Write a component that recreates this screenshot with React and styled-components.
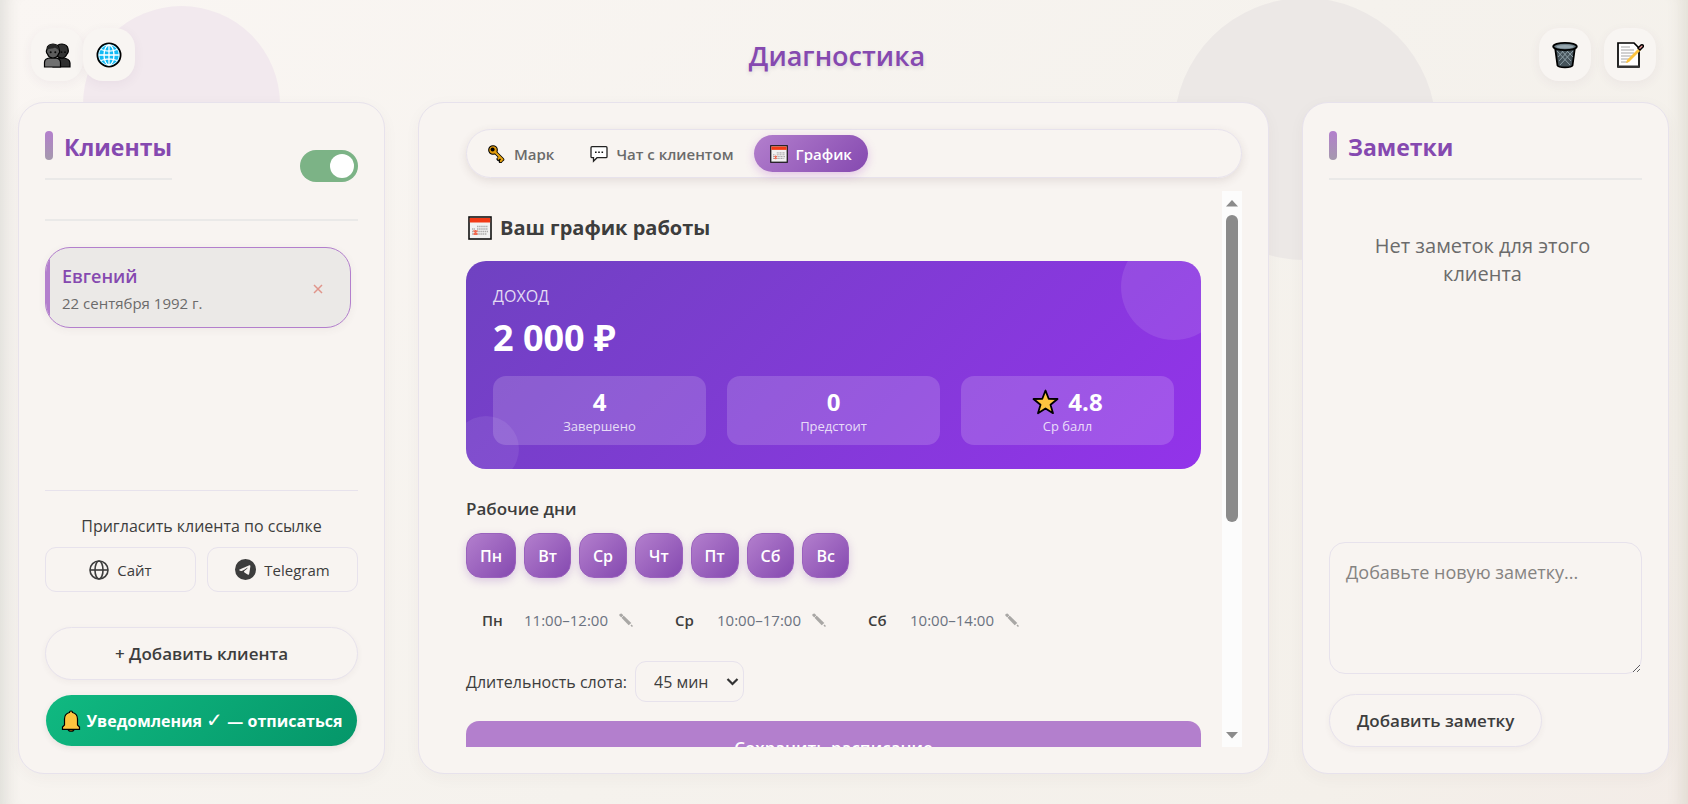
import React, { useState } from "react";
import styled, { createGlobalStyle, css } from "styled-components";

const GlobalStyle = createGlobalStyle`
  *, *::before, *::after { box-sizing: border-box; }
  html, body { margin: 0; padding: 0; }
  body {
    font-family: "Open Sans", "Noto Sans", sans-serif;
    color: #3d3d3d;
    background: #f8f5f1;
  }
  button, input, select, textarea { font-family: inherit; color: inherit; }
  button { cursor: pointer; }
  h1, h2, h3, p, ul { margin: 0; padding: 0; }
`;

const Page = styled.div`
  position: relative;
  display: flex;
  flex-direction: column;
  height: 100vh;
  min-height: 640px;
  padding-bottom: 30px;
  overflow: hidden;
  background: linear-gradient(135deg, #faf6f3 0%, #f5f2ed 55%, #f4f0ea 85%, #f3ece7 100%);
  box-shadow: inset 20px 0 16px -14px rgba(80, 90, 80, 0.14), inset -20px 0 16px -14px rgba(80, 80, 50, 0.11);
`;

const Orb = styled.div`
  position: absolute;
  width: ${(p) => p.$size}px;
  height: ${(p) => p.$size}px;
  left: ${(p) => p.$left};
  top: ${(p) => p.$top}px;
  border-radius: 50%;
  background: ${(p) => p.$color};
`;

const TopBar = styled.header`
  position: relative;
  display: flex;
  justify-content: space-between;
  align-items: center;
  padding: 28px 32px 21px 31px;
`;

const Group = styled.div`
  display: flex;
  gap: ${(p) => p.$gap}px;
`;

const IconButton = styled.button`
  display: grid;
  place-items: center;
  width: 52px;
  height: 53px;
  padding: 0;
  border: 0;
  border-radius: 20px;
  background: #f8f5f2;
  box-shadow: 0 3px 12px rgba(80, 50, 100, 0.06);
`;

const PageTitle = styled.h1`
  padding-top: 2px;
  font-size: 27px;
  line-height: 40px;
  font-weight: 600;
  color: #8549b0;
  text-shadow: 0 2px 4px rgba(60, 40, 80, 0.14);
`;

const Columns = styled.main`
  position: relative;
  flex: 1;
  min-height: 0;
  display: grid;
  grid-template-columns: 367px minmax(0, 1fr) 367px;
  gap: 33px;
  padding: 0 19px 0 18px;
`;

const Panel = styled.section`
  display: flex;
  flex-direction: column;
  min-height: 0;
  padding: ${(p) => (p.$wide ? "26px 26px 26px 47px" : "27px 26px 26px")};
  border: 1px solid #e7e2ec;
  border-radius: 26px;
  background: #f8f4f1;
  box-shadow: 0 4px 16px rgba(80, 60, 60, 0.04);
`;

const SectionTitle = styled.h2`
  display: flex;
  gap: 11px;
  padding-bottom: 14px;
  border-bottom: 2px solid #eae9e8;
  font-size: 23px;
  line-height: 34px;
  font-weight: 700;
  color: #8549b0;

  &::before {
    content: "";
    width: 8px;
    height: 29px;
    margin-top: 1px;
    border-radius: 4px;
    background: linear-gradient(#b37fcd, #a599ad);
  }
`;

const ClientsHead = styled.div`
  display: flex;
  align-items: center;
  justify-content: space-between;
  height: 91px;
  padding-bottom: 17px;
  border-bottom: 2px solid #eae9e8;

  ${SectionTitle} { margin-bottom: 22px; }
`;

const Toggle = styled.input`
  appearance: none;
  width: 58px;
  height: 32px;
  margin: 0;
  padding: 4px;
  border-radius: 16px;
  background: ${(p) => (p.checked ? "#7cb386" : "#c9c5c2")};
  display: flex;
  justify-content: ${(p) => (p.checked ? "flex-end" : "flex-start")};
  cursor: pointer;

  &::before {
    content: "";
    width: 24px;
    height: 24px;
    border-radius: 50%;
    background: #fff;
  }
`;

const ClientList = styled.ul`
  flex: 1;
  min-height: 0;
  list-style: none;
  padding: 26px 7px 0 0;
`;

const ClientCard = styled.li`
  position: relative;
  overflow: hidden;
  display: flex;
  align-items: center;
  justify-content: space-between;
  height: 81px;
  padding: 2px 17px 0 16px;
  border: 1px solid #b37fcd;
  border-radius: 25px;
  background: #ebe9e7;
  box-shadow: 0 2px 8px rgba(80, 60, 60, 0.06);

  &::before {
    content: "";
    position: absolute;
    inset: 0 auto 0 0;
    width: 4px;
    background: #b37fcd;
  }
`;

const ClientName = styled.div`
  font-size: 18px;
  line-height: 28px;
  font-weight: 600;
  color: #8549b0;
`;

const ClientDate = styled.div`
  font-size: 15px;
  line-height: 26px;
  color: #6b6b6b;
`;

const RemoveButton = styled.button`
  display: grid;
  place-items: center;
  width: 30px;
  height: 30px;
  padding: 0;
  border: 0;
  background: none;
`;

const Invite = styled.div`
  display: grid;
  grid-template-columns: 1fr 1fr;
  gap: 9px 11px;
  padding-top: 23px;
  margin-bottom: 35px;
  border-top: 1px solid #e7e2ec;
`;

const InviteText = styled.p`
  grid-column: 1 / -1;
  font-size: 16px;
  line-height: 24px;
  text-align: center;
`;

const InviteButton = styled.button`
  display: flex;
  align-items: center;
  justify-content: center;
  gap: 8px;
  height: 45px;
  padding: 0;
  border: 1px solid #e7e2ec;
  border-radius: 11px;
  background: transparent;
  font-size: 15px;
`;

const PillButton = styled.button`
  height: 53px;
  padding: 0 27px;
  align-self: ${(p) => (p.$fit ? "flex-start" : "stretch")};
  border: 1px solid #e7e2ec;
  border-radius: 27px;
  background: #f8f4f1;
  font-size: 17px;
  font-weight: 600;
  box-shadow: 0 2px 6px rgba(80, 60, 60, 0.05);
`;

const NotifyButton = styled.button`
  display: flex;
  align-items: center;
  justify-content: center;
  gap: 6px;
  height: 51px;
  margin: 15px 1px 1px;
  padding: 0;
  border: 0;
  border-radius: 26px;
  background: linear-gradient(135deg, #10b981, #059669);
  color: #fff;
  font-size: 16px;
  font-weight: 700;
  white-space: nowrap;
  box-shadow: 0 2px 6px rgba(80, 60, 60, 0.1);
`;

const Check = styled.span`
  font-size: 20px;
  line-height: 20px;
  font-weight: 400;
`;

const Tabs = styled.nav`
  display: flex;
  align-items: center;
  gap: 4px;
  flex: none;
  height: 49px;
  padding: 0 5px;
  border: 1px solid #e7e2ec;
  border-radius: 25px;
  box-shadow: 0 3px 10px rgba(80, 60, 60, 0.12);
`;

const Tab = styled.button`
  display: flex;
  align-items: center;
  gap: 8px;
  height: 37px;
  padding: 0 16px;
  border: 0;
  border-radius: 19px;
  background: none;
  color: #6b6b6b;
  font-size: 15px;
  font-weight: 600;
  ${(p) =>
    p.$active &&
    css`
      color: #fff;
      background: linear-gradient(135deg, #b37fcd, #8549b0);
      box-shadow: 0 3px 10px rgba(179, 90, 205, 0.3);
    `}
`;

const ScrollFrame = styled.div`
  flex: 1;
  min-height: 0;
  display: flex;
  gap: 21px;
  margin-top: 13px;
`;

const ScrollBody = styled.div`
  flex: 1;
  min-width: 0;
  overflow-y: auto;
  scrollbar-width: none;
  margin-left: -10px;
  padding-left: 10px;
`;

const ScrollTrack = styled.div`
  display: flex;
  flex-direction: column;
  align-items: center;
  justify-content: space-between;
  width: 20px;
  padding: 9px 0 8px;
  background: #fcfcfc;
`;

const ScrollThumb = styled.div`
  width: 12px;
  height: 57%;
  margin-bottom: auto;
  margin-top: 8px;
  border-radius: 6px;
  background: #8b8b8b;
`;

const ScheduleTitle = styled.h3`
  display: flex;
  align-items: center;
  gap: 8px;
  padding: 21px 0 17px 2px;
  font-size: 20px;
  line-height: 32px;
  font-weight: 700;
`;

const IncomeCard = styled.div`
  position: relative;
  overflow: hidden;
  padding: 22px 27px 24px;
  border-radius: 20px;
  background: linear-gradient(135deg, #6f42c1 0%, #9333ea 100%);
  color: #fff;
`;

const Bubble = styled.div`
  position: absolute;
  width: ${(p) => p.$size}px;
  height: ${(p) => p.$size}px;
  border-radius: 50%;
  background: rgba(255, 255, 255, ${(p) => p.$alpha});
  ${(p) => (p.$corner === "top" ? "top: -27px; right: -26px;" : "bottom: -13px; left: -13px;")}
`;

const IncomeLabel = styled.div`
  font-size: 16px;
  line-height: 26px;
  color: rgba(255, 255, 255, 0.82);
`;

const IncomeValue = styled.div`
  margin: 4px 0 13px;
  font-size: 36px;
  line-height: 50px;
  font-weight: 700;
`;

const Stats = styled.div`
  position: relative;
  display: grid;
  grid-template-columns: repeat(3, 1fr);
  gap: 21px;
`;

const Stat = styled.div`
  height: 69px;
  padding-top: 11px;
  border-radius: 13px;
  background: rgba(255, 255, 255, 0.16);
  text-align: center;
`;

const StatValue = styled.div`
  display: flex;
  align-items: center;
  justify-content: center;
  gap: 9px;
  font-size: 24px;
  line-height: 30px;
  font-weight: 700;
`;

const StatLabel = styled.div`
  font-size: 13px;
  line-height: 18px;
  color: rgba(255, 255, 255, 0.8);
`;

const Subheading = styled.h3`
  margin-top: 27px;
  font-size: 17px;
  line-height: 26px;
  font-weight: 600;
`;

const Days = styled.div`
  display: flex;
  gap: 8px;
  margin-top: 11px;
`;

const DayButton = styled.button`
  height: 45px;
  padding: 0 13px;
  border: 1px solid #9a62bd;
  border-radius: 15px;
  background: linear-gradient(135deg, #b37fcd, #8549b0);
  color: #fff;
  font-size: 16px;
  font-weight: 600;
  box-shadow: 0 3px 9px rgba(133, 73, 176, 0.25);
`;

const Hours = styled.ul`
  display: flex;
  list-style: none;
  margin-top: 27px;
  padding-left: 16px;
`;

const HoursItem = styled.li`
  display: grid;
  grid-template-columns: 42px 87px auto;
  align-items: center;
  width: 193px;
  height: 30px;
  font-size: 15px;
  color: #6b7280;

  b { font-weight: 600; color: #3d3d3d; }
`;

const EditButton = styled.button`
  display: grid;
  place-items: center;
  width: 30px;
  height: 24px;
  padding: 0;
  border: 0;
  background: none;
`;

const SlotRow = styled.div`
  display: flex;
  align-items: center;
  gap: 8px;
  margin: 26px 0 19px;
  font-size: 16px;
`;

const SelectWrap = styled.span`
  display: grid;
  align-items: center;

  > * { grid-area: 1 / 1; }
  svg { justify-self: end; margin-right: 5px; pointer-events: none; }
`;

const SlotSelect = styled.select`
  appearance: none;
  width: 109px;
  height: 41px;
  padding: 0 18px;
  border: 1px solid #e7e2ec;
  border-radius: 11px;
  background: transparent;
  font-size: 16px;
`;

const SaveButton = styled.button`
  width: 100%;
  height: 53px;
  border: 0;
  border-radius: 13px;
  background: #b37fcd;
  color: #fff;
  font-size: 17px;
  font-weight: 600;
`;

const EmptyNotes = styled.p`
  flex: 1;
  padding: 52px 32px 0 26px;
  text-align: center;
  font-size: 20px;
  line-height: 28px;
  color: #6b6b6b;
`;

const NoteInput = styled.textarea`
  display: block;
  height: 132px;
  margin-bottom: 20px;
  padding: 17px 16px;
  border: 1px solid #e7e2ec;
  border-radius: 16px;
  background: transparent;
  font-size: 18px;
  line-height: 25px;
  resize: vertical;

  &::placeholder { color: #858381; }
`;

const PeopleIcon = () => (
  <svg width="28" height="28" viewBox="0 0 28 28" aria-hidden="true">
    <path d="M10 26v-5c1-3 4-4 8-4 5 0 9 1 9 5v4z" fill="#2f2f2f" stroke="#000" strokeWidth="1.200" />
    <path d="M13 7c1-3 4-4 6-4 3 0 6 2 6 5 1 3 0 4-1 5-1 2-3 4-5 4s-5-1-6-4z" fill="#333" stroke="#000" strokeWidth="1.200" />
    <path d="M1.500 26v-4.500c0-3 2.500-4.500 6.500-4.500h3c4 0 6.500 1.500 6.500 4.500V26z" fill="#707070" stroke="#000" strokeWidth="1.200" />
    <path d="M4 8c0-3 2.500-5 6-5s6 2 6 5c1 2 .5 4-.5 5-1 3-3.500 4-5.500 4s-4.500-1-5.500-4c-1-1-1.500-3-.5-5z" fill="#5c5c5c" stroke="#000" strokeWidth="1.200" />
    <path d="M4 9c0-4 2.500-5.500 6-5.500s6 1.500 6 5.500c-3-1-3-3-5-2S6 7 4 9z" fill="#262626" />
    <g fill="#0a0a0a">
      <circle cx="7.700" cy="11.200" r="1" />
      <circle cx="12.300" cy="11.200" r="1" />
      <circle cx="18.500" cy="11.200" r=".9" />
      <circle cx="22" cy="11.200" r=".9" />
    </g>
  </svg>
);

const GlobeIcon = () => (
  <svg width="28" height="28" viewBox="0 0 28 28" aria-hidden="true">
    <circle cx="14" cy="14" r="11.600" fill="#12baf5" stroke="#000" strokeWidth="1.800" />
    <g fill="none" stroke="#fff" strokeWidth="1.300">
      <circle cx="14" cy="14" r="10.200" strokeWidth=".8" />
      <path d="M14 4v20M4 14h20M6 8.500c5 2 11 2 16 0M6 19.500c5-2 11-2 16 0" />
      <ellipse cx="14" cy="14" rx="5" ry="10" />
    </g>
  </svg>
);

const TrashIcon = () => (
  <svg width="28" height="28" viewBox="0 0 28 28" aria-hidden="true">
    <path d="M4 6l2.500 18.500c1 2.500 14 2.500 15 0L24 6z" fill="#46535a" stroke="#000" strokeWidth="1.800" />
    <path d="M6 10l13 14M10 9l10 11M15 9l7 7M22 10L9 24M18 9L8 20M13 9l-6 7" stroke="#8fa0a8" strokeWidth="1" />
    <ellipse cx="14" cy="5.500" rx="11.800" ry="3.700" fill="#6f8089" stroke="#000" strokeWidth="1.800" />
    <ellipse cx="14" cy="5.800" rx="8.500" ry="1.700" fill="#98a8b0" />
  </svg>
);

const MemoIcon = () => (
  <svg width="28" height="28" viewBox="0 0 28 28" aria-hidden="true">
    <path d="M2 2h16l5 5v19H2z" fill="#fff" stroke="#000" strokeWidth="1.700" />
    <path d="M2 25.500h21" stroke="#333" strokeWidth="2" />
    <path d="M5 6h9M5 9h13M5 12h13M5 15h11M5 18h9M5 21h7" stroke="#a6a6a6" strokeWidth="1.100" />
    <path d="M10 22l1-3L23 7l2 2-12 12z" fill="#fdc43f" />
    <path d="M22 7l3-3c2-1 3 1 2 2l-3 3z" fill="#f19b9b" stroke="#000" strokeWidth="1.500" />
  </svg>
);

const CalendarIcon = ({ size }) => (
  <svg width={size} height={size} viewBox="0 0 24 24" aria-hidden="true">
    <rect x="1" y="1" width="22" height="22" fill="#f2f2f2" stroke="#111" strokeWidth="1.600" />
    <path d="M1.800 2h20.400v4.500H1.800z" fill="#f23a16" />
    <path d="M9 10.500h11M9 13h11M4 13h3M4 15.500h16M4 18h15" stroke="#adadad" strokeWidth="1.500" strokeDasharray="1.500 .6" />
    <path d="M5.500 14.500l4 4M9.500 14.500l-4 4M7.500 14v5" stroke="#f2694f" strokeWidth="1.300" />
  </svg>
);

const KeyIcon = () => (
  <svg width="18" height="18" viewBox="0 0 18 18" aria-hidden="true">
    <path d="M7 7l7.500 7.500M11.500 12.500l-1.200 1.500M14 14.500l-1.500 2" stroke="#000" strokeWidth="3.600" strokeLinecap="round" />
    <circle cx="5" cy="5" r="4.300" fill="#e39b0b" stroke="#000" strokeWidth="1.100" />
    <path d="M7.500 7.500l7 7M11.500 12.500l-1 1.200M14 14.500l-1.200 1.700" stroke="#e8a30f" strokeWidth="2" strokeLinecap="round" />
    <circle cx="4.600" cy="4.600" r="2" fill="#000" />
  </svg>
);

const ChatIcon = () => (
  <svg width="18" height="18" viewBox="0 0 18 18" aria-hidden="true">
    <path d="M2 1.700h14q1 0 1 1v9q0 1-1 1H7l-3.500 3.500v-3.500H2q-1 0-1-1v-9q0-1 1-1z" fill="#fff" stroke="#222" strokeWidth="1.300" />
    <path d="M5 7.200h1.600M8.200 7.200h1.600M11.500 7.200h1.600" stroke="#111" strokeWidth="1.600" />
  </svg>
);

const BellIcon = () => (
  <svg width="20" height="22" viewBox="0 0 20 22" aria-hidden="true">
    <path d="M7 19h6c0 3-6 3-6 0z" fill="#c46f0b" stroke="#000" strokeWidth="1.200" />
    <path d="M8.500 2.500c0-2 3-2 3 0 3 .7 5 3 5 6.500v6l2 2v2.300h-17V17l2-2V9c0-3.500 2-5.800 5-6.500z" fill="#fdc43f" stroke="#000" strokeWidth="1.200" />
  </svg>
);

const StarIcon = () => (
  <svg width="27" height="26" viewBox="0 0 27 26" aria-hidden="true">
    <path d="M13.500 1.500l3.200 8.300 8.800.2-7 5.700 2.500 8.500-7.500-4.700L6 24.200l2.500-8.500-7-5.700 8.800-.2z" fill="#fdc43f" stroke="#000" strokeWidth="1.800" strokeLinejoin="round" />
  </svg>
);

const SiteIcon = () => (
  <svg width="20" height="20" viewBox="0 0 20 20" fill="none" stroke="#3d3d3d" strokeWidth="1.600" aria-hidden="true">
    <circle cx="10" cy="10" r="9" />
    <ellipse cx="10" cy="10" rx="4" ry="9" />
    <path d="M1 10h18" />
  </svg>
);

const TelegramIcon = () => (
  <svg width="21" height="21" viewBox="0 0 24 24" aria-hidden="true">
    <path fill="#3d3d3d" d="M11.944 0A12 12 0 0 0 0 12a12 12 0 0 0 12 12 12 12 0 0 0 12-12A12 12 0 0 0 12 0a12 12 0 0 0-.056 0zm4.962 7.224c.1-.002.321.023.465.14a.506.506 0 0 1 .171.325c.016.093.036.306.02.472-.18 1.898-.962 6.502-1.36 8.627-.168.9-.499 1.201-.82 1.230-.696.065-1.225-.46-1.900-.902-1.056-.693-1.653-1.124-2.678-1.800-1.185-.78-.417-1.210.258-1.910.177-.184 3.247-2.977 3.307-3.230.007-.032.014-.15-.056-.212s-.174-.041-.249-.024c-.106.024-1.793 1.140-5.061 3.345-.48.330-.913.490-1.302.480-.428-.008-1.252-.241-1.865-.440-.752-.245-1.349-.374-1.297-.789.027-.216.325-.437.893-.663 3.498-1.524 5.830-2.529 6.998-3.014 3.332-1.386 4.025-1.627 4.476-1.635z" />
  </svg>
);

const PencilIcon = () => (
  <svg width="14" height="14" viewBox="0 0 14 14" aria-hidden="true">
    <path d="M.3 2.500Q0 .5 2.500.5L12.300 10l-2.600 2.300z" fill="#a9a7a5" />
    <path d="M12 12l1.500 1.500" stroke="#a9a7a5" strokeWidth="1.500" />
    <path d="M2 5l3-3" stroke="#f8f4f1" strokeWidth=".7" />
  </svg>
);

const CrossIcon = () => (
  <svg width="10" height="10" viewBox="0 0 10 10" aria-hidden="true">
    <path d="M1 1l8 8M9 1L1 9" stroke="#e0958b" strokeWidth="1.500" />
  </svg>
);

const ChevronIcon = () => (
  <svg width="13" height="10" viewBox="0 0 13 10" aria-hidden="true">
    <path d="M1.500 2l5 5 5-5" fill="none" stroke="#333" strokeWidth="2.200" />
  </svg>
);

const ArrowIcon = ({ down }) => (
  <svg width="12" height="7" viewBox="0 0 12 7" aria-hidden="true">
    <path d={down ? "M0 0h12L6 6.500z" : "M0 6.500h12L6 0z"} fill="#8b8b8b" />
  </svg>
);

const tabs = [
  { label: "Марк", icon: <KeyIcon /> },
  { label: "Чат с клиентом", icon: <ChatIcon /> },
  { label: "График", icon: <CalendarIcon size={18} /> },
];

const stats = [
  { value: "4", label: "Завершено" },
  { value: "0", label: "Предстоит" },
  { value: "4.8", label: "Ср балл", star: true },
];

const days = ["Пн", "Вт", "Ср", "Чт", "Пт", "Сб", "Вс"];

const hours = [
  ["Пн", "11:00–12:00"],
  ["Ср", "10:00–17:00"],
  ["Сб", "10:00–14:00"],
];

export default function App() {
  const [online, setOnline] = useState(true);
  const [tab, setTab] = useState(2);

  return (
    <Page>
      <GlobalStyle />
      <Orb $size={197} $left="83px" $top={6} $color="#f2e9ee" />
      <Orb $size={262} $left="calc(70% - 8px)" $top={-2} $color="#ece8e6" />

      <TopBar>
        <Group $gap={0}>
          <IconButton aria-label="Клиенты"><PeopleIcon /></IconButton>
          <IconButton aria-label="Язык"><GlobeIcon /></IconButton>
        </Group>
        <PageTitle>Диагностика</PageTitle>
        <Group $gap={13}>
          <IconButton aria-label="Удалить"><TrashIcon /></IconButton>
          <IconButton aria-label="Заметки"><MemoIcon /></IconButton>
        </Group>
      </TopBar>

      <Columns>
        <Panel>
          <ClientsHead>
            <SectionTitle>Клиенты</SectionTitle>
            <Toggle
              type="checkbox"
              role="switch"
              aria-label="Онлайн"
              checked={online}
              onChange={(e) => setOnline(e.target.checked)}
            />
          </ClientsHead>
          <ClientList>
            <ClientCard>
              <div>
                <ClientName>Евгений</ClientName>
                <ClientDate>22 сентября 1992 г.</ClientDate>
              </div>
              <RemoveButton aria-label="Удалить клиента"><CrossIcon /></RemoveButton>
            </ClientCard>
          </ClientList>
          <Invite>
            <InviteText>Пригласить клиента по ссылке</InviteText>
            <InviteButton><SiteIcon />Сайт</InviteButton>
            <InviteButton><TelegramIcon />Telegram</InviteButton>
          </Invite>
          <PillButton>+ Добавить клиента</PillButton>
          <NotifyButton>
            <BellIcon />
            <span>Уведомления <Check>✓</Check> — отписаться</span>
          </NotifyButton>
        </Panel>

        <Panel $wide>
          <Tabs>
            {tabs.map((t, i) => (
              <Tab key={t.label} $active={i === tab} onClick={() => setTab(i)}>
                {t.icon}
                {t.label}
              </Tab>
            ))}
          </Tabs>
          <ScrollFrame>
            <ScrollBody>
              <ScheduleTitle><CalendarIcon size={24} />Ваш график работы</ScheduleTitle>
              <IncomeCard>
                <Bubble $size={106} $alpha={0.1} $corner="top" />
                <Bubble $size={66} $alpha={0.08} $corner="bottom" />
                <IncomeLabel>ДОХОД</IncomeLabel>
                <IncomeValue>2 000 ₽</IncomeValue>
                <Stats>
                  {stats.map((s) => (
                    <Stat key={s.label}>
                      <StatValue>{s.star && <StarIcon />}{s.value}</StatValue>
                      <StatLabel>{s.label}</StatLabel>
                    </Stat>
                  ))}
                </Stats>
              </IncomeCard>
              <Subheading>Рабочие дни</Subheading>
              <Days>
                {days.map((d) => <DayButton key={d}>{d}</DayButton>)}
              </Days>
              <Hours>
                {hours.map(([day, time]) => (
                  <HoursItem key={day}>
                    <b>{day}</b>
                    <span>{time}</span>
                    <EditButton aria-label={`Изменить ${day}`}><PencilIcon /></EditButton>
                  </HoursItem>
                ))}
              </Hours>
              <SlotRow>
                <label htmlFor="slot">Длительность слота:</label>
                <SelectWrap>
                  <SlotSelect id="slot" defaultValue="45">
                    <option value="45">45 мин</option>
                  </SlotSelect>
                  <ChevronIcon />
                </SelectWrap>
              </SlotRow>
              <SaveButton>Сохранить расписание</SaveButton>
            </ScrollBody>
            <ScrollTrack aria-hidden="true">
              <ArrowIcon />
              <ScrollThumb />
              <ArrowIcon down />
            </ScrollTrack>
          </ScrollFrame>
        </Panel>

        <Panel>
          <SectionTitle>Заметки</SectionTitle>
          <EmptyNotes>Нет заметок для этого клиента</EmptyNotes>
          <NoteInput aria-label="Новая заметка" placeholder="Добавьте новую заметку..." />
          <PillButton $fit>Добавить заметку</PillButton>
        </Panel>
      </Columns>
    </Page>
  );
}
